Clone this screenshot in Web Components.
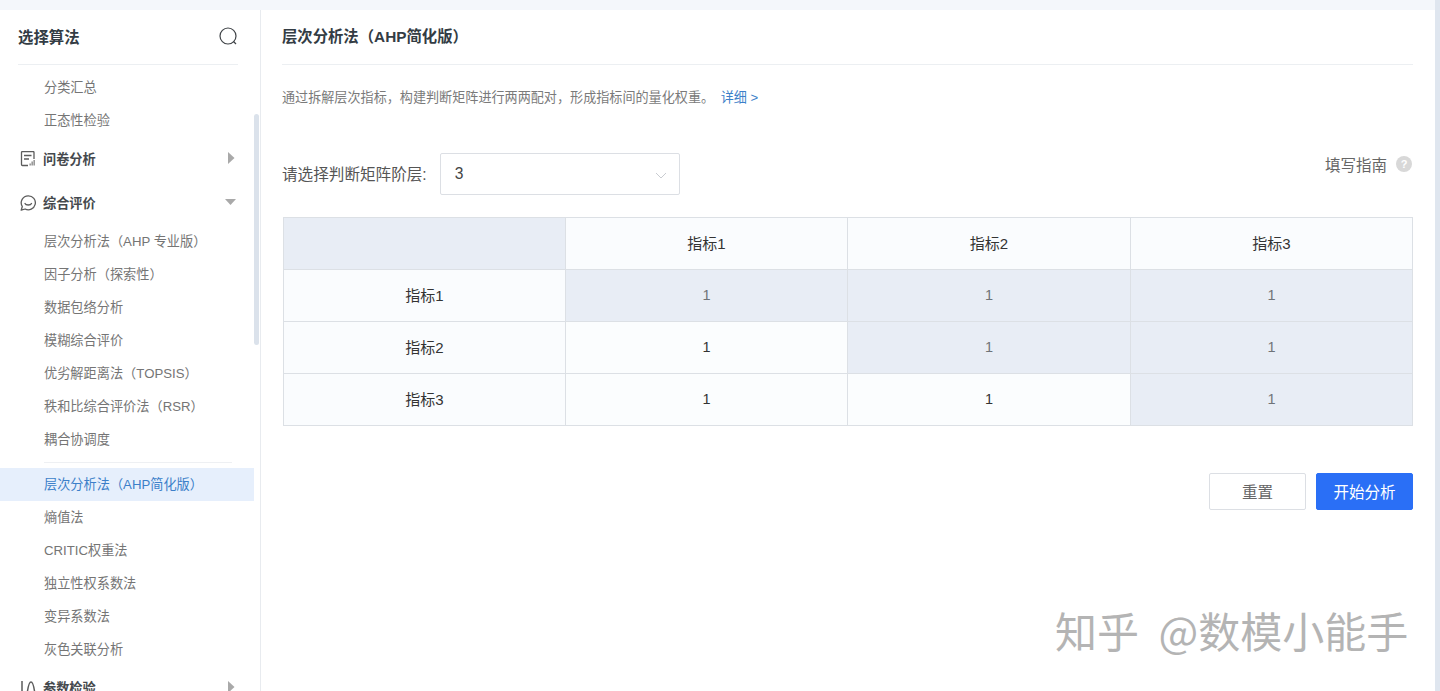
<!DOCTYPE html>
<html lang="zh">
<head>
<meta charset="utf-8">
<title>层次分析法</title>
<style>
    html, body {
        margin: 0;
        height: 691px;
        overflow: hidden;
        background: #f4f7fb;
        font-family: "Liberation Sans", "Noto Sans CJK SC", sans-serif;
    }
</style>
</head>
<body>
<app-shell>
    <algo-sidebar slot="side"></algo-sidebar>
    <ahp-panel slot="main"></ahp-panel>
</app-shell>
<water-mark>知乎 @数模小能手</water-mark>

<script>
class AppShell extends HTMLElement {
    constructor() {
        super();
        this.attachShadow({ mode: "open" });
        this.shadowRoot.innerHTML = `<style>
            :host {
                display: flex;
                height: 691px;
                box-sizing: border-box;
                padding: 10px 5px 0 0;
                position: relative;
            }
            .bar {
                position: absolute;
                right: 0;
                top: 0;
                bottom: 0;
                width: 5px;
                background: #dfe6ef;
            }
            .side { flex: 0 0 261px; display: flex; min-height: 0; }
            .main { flex: 1; display: flex; min-width: 0; background: #fff; }
        </style>
        <div class="side"><slot name="side"></slot></div>
        <div class="main"><slot name="main"></slot></div>
        <div class="bar"></div>`;
    }
}

class NavItem extends HTMLElement {
    constructor() {
        super();
        this.attachShadow({ mode: "open" });
        this.shadowRoot.innerHTML = `<style>
            :host {
                display: block;
                height: 33px;
                line-height: 33px;
                padding-left: 44px;
                font-size: 13.2px;
                color: #757575;
                white-space: nowrap;
            }
            :host([active]) {
                background: #e6effc;
                color: #3c7fc9;
            }
        </style><slot></slot>`;
    }
}

const NAV_ICONS = {
    form: `<path d="M8 14.500H2.500a1 1 0 0 1-1-1V1.500a1 1 0 0 1 1-1h10.500a1 1 0 0 1 1 1V8" fill="none" stroke="#5c5c5c" stroke-width="1.300"/>
           <path d="M4 4.500h7.500M4 8h5" stroke="#5c5c5c" stroke-width="1.300"/>
           <path d="M9.500 12.500h1.300v2H9.500zM11.500 10.500h1.300v4h-1.300zM13.500 9h1.300v5.500h-1.300z" fill="#808080"/>`,
    chat: `<path d="M8.300.8a7 7 0 1 1-3.200 13.200L1.200 15.200l1.100-3.700A7 7 0 0 1 8.300.8z" fill="none" stroke="#5c5c5c" stroke-width="1.300" stroke-linejoin="round"/>
           <path d="M5 8.500c.8 2 5.700 2 6.500 0" fill="none" stroke="#5c5c5c" stroke-width="1.300" stroke-linecap="round"/>`,
    wave: `<path d="M2 1v14M7 15c1-9 2.500-13 4-13s3 4 4 13" fill="none" stroke="#5c5c5c" stroke-width="1.500"/>`
};

class NavGroup extends HTMLElement {
    constructor() {
        super();
        this.attachShadow({ mode: "open" });
    }
    connectedCallback() {
        const open = this.hasAttribute("open");
        const arrow = open
            ? `<path d="M0 3h11L5.500 9z" fill="#a9a9a9"/>`
            : `<path d="M3 0l6.500 6L3 12z" fill="#a9a9a9"/>`;
        this.shadowRoot.innerHTML = `<style>
            :host {
                display: flex;
                align-items: center;
                height: 44px;
                padding: 0 17px 0 20px;
                font-size: 13.2px;
                font-weight: bold;
                color: #45494d;
            }
            svg.icon { width: 16px; height: 16px; flex: none; margin-right: 7px; }
            span { flex: 1; margin-bottom: 2px; }
            svg.arrow { width: 12px; height: 12px; flex: none; margin-bottom: 2px; }
        </style>
        <svg class="icon" viewBox="0 0 16 16">${NAV_ICONS[this.getAttribute("icon")]}</svg>
        <span>${this.getAttribute("label")}</span>
        <svg class="arrow" viewBox="0 0 12 12">${arrow}</svg>`;
    }
}

class AlgoSidebar extends HTMLElement {
    constructor() {
        super();
        this.attachShadow({ mode: "open" });
        this.shadowRoot.innerHTML = `<style>
            :host {
                display: block;
                width: 261px;
                box-sizing: border-box;
                background: #fff;
                border-right: 1px solid #e8ebef;
                position: relative;
                overflow: hidden;
            }
            header {
                display: flex;
                align-items: center;
                justify-content: space-between;
                height: 55px;
                margin: 0 22px 0 18px;
                padding-bottom: 3px;
                box-sizing: border-box;
                border-bottom: 1px solid #eceff2;
                font-size: 15.400px;
                font-weight: bold;
                color: #333c44;
            }
            header svg { width: 20px; height: 20px; margin-right: 0; }
            .list { width: 254px; padding-top: 6px; }
            .sep { height: 1px; margin: 6px 22px 5px 44px; background: #eef0f3; }
            .thumb {
                position: absolute;
                left: 254px;
                top: 104px;
                width: 5px;
                height: 231px;
                border-radius: 3px;
                background: #dbe2eb;
            }
        </style>
        <header>
            <span>选择算法</span>
            <svg viewBox="0 0 20 20"><circle cx="10" cy="10" r="8" fill="none" stroke="#3f4347" stroke-width="1.200"/><path d="M15.500 15.500l2.500 2.500" stroke="#3f4347" stroke-width="1.200"/></svg>
        </header>
        <div class="list">
            <nav-item>分类汇总</nav-item>
            <nav-item>正态性检验</nav-item>
            <nav-group icon="form" label="问卷分析"></nav-group>
            <nav-group icon="chat" label="综合评价" open></nav-group>
            <nav-item>层次分析法（AHP 专业版）</nav-item>
            <nav-item>因子分析（探索性）</nav-item>
            <nav-item>数据包络分析</nav-item>
            <nav-item>模糊综合评价</nav-item>
            <nav-item>优劣解距离法（TOPSIS）</nav-item>
            <nav-item>秩和比综合评价法（RSR）</nav-item>
            <nav-item>耦合协调度</nav-item>
            <div class="sep"></div>
            <nav-item active>层次分析法（AHP简化版）</nav-item>
            <nav-item>熵值法</nav-item>
            <nav-item>CRITIC权重法</nav-item>
            <nav-item>独立性权系数法</nav-item>
            <nav-item>变异系数法</nav-item>
            <nav-item>灰色关联分析</nav-item>
            <nav-group icon="wave" label="参数检验"></nav-group>
        </div>
        <div class="thumb"></div>`;
    }
}

class MatrixTable extends HTMLElement {
    constructor() {
        super();
        this.attachShadow({ mode: "open" });
    }
    connectedCallback() {
        const size = Number(this.getAttribute("size"));
        let cells = `<div class="c shade"></div>`;
        for (let i = 1; i <= size; i++) {
            cells += `<div class="c head">指标${i}</div>`;
        }
        for (let r = 1; r <= size; r++) {
            cells += `<div class="c head">指标${r}</div>`;
            for (let c = 1; c <= size; c++) {
                cells += c >= r
                    ? `<div class="c shade val">1</div>`
                    : `<div class="c plain val">1</div>`;
            }
        }
        this.shadowRoot.innerHTML = `<style>
            :host {
                display: grid;
                grid-template-columns: 282px 282px 283px 1fr;
                grid-auto-rows: 52px;
                margin: 0 0 0 1px;
                border-top: 1px solid #dce0e5;
                border-left: 1px solid #dce0e5;
                font-size: 15px;
            }
            .c {
                display: flex;
                align-items: center;
                justify-content: center;
                box-sizing: border-box;
                padding-bottom: 2px;
                border-right: 1px solid #dce0e5;
                border-bottom: 1px solid #dce0e5;
            }
            .head { background: #fafcfe; color: #333; }
            .shade { background: #e8edf5; }
            .plain { background: #fbfdfe; }
            .val { font-size: 14.500px; color: #333; }
            .shade.val { color: #6f7378; }
        </style>${cells}`;
    }
}

class AhpPanel extends HTMLElement {
    constructor() {
        super();
        this.attachShadow({ mode: "open" });
        this.shadowRoot.innerHTML = `<style>
            :host {
                display: block;
                flex: 1;
                box-sizing: border-box;
                padding: 0 22px 0 21px;
                color: #555;
                min-width: 0;
            }
            h1 {
                margin: 0;
                height: 55px;
                line-height: 53px;
                box-sizing: border-box;
                border-bottom: 1px solid #eceff2;
                font-size: 15.350px;
                font-weight: bold;
                color: #333c44;
            }
            .desc {
                margin: 0;
                padding-top: 24px;
                height: 64px;
                box-sizing: border-box;
                line-height: 18px;
                font-size: 13.100px;
                color: #7a7a7a;
            }
            .desc a { margin-left: 3px; color: #3c7fc9; text-decoration: none; }
            .pick {
                display: flex;
                align-items: center;
                height: 42px;
                margin-top: 24px;
                font-size: 15.600px;
            }
            .pick > span { margin-bottom: 3px; }
            .select {
                display: flex;
                align-items: center;
                justify-content: space-between;
                box-sizing: border-box;
                width: 240px;
                height: 42px;
                margin-left: 13px;
                padding: 0 12px 0 14px;
                border: 1px solid #dcdfe4;
                border-radius: 2px;
                color: #444;
            }
            .select svg { width: 12px; height: 8px; margin-top: 4px; }
            .guide {
                display: flex;
                align-items: center;
                gap: 9px;
                margin-left: auto;
                margin-top: -17px;
                padding-right: 1px;
                font-size: 15.500px;
                color: #666;
            }
            .guide span { margin-bottom: 3px; }
            .guide i {
                width: 16px;
                height: 16px;
                margin-bottom: 3px;
                border-radius: 50%;
                background: #d8d8d8;
                color: #fff;
                font: bold 11px/16px "Liberation Sans", sans-serif;
                text-align: center;
            }
            matrix-table { margin-top: 22px; }
            .actions {
                display: flex;
                justify-content: flex-end;
                gap: 10px;
                margin-top: 47px;
            }
            button {
                width: 97px;
                height: 37px;
                padding: 0 0 2px;
                border: 1px solid #dcdfe4;
                border-radius: 2px;
                background: #fff;
                color: #666;
                font: 15.500px "Liberation Sans", "Noto Sans CJK SC", sans-serif;
            }
            button.go {
                border-color: #2a6ff6;
                background: #2a6ff6;
                color: #fff;
            }
        </style>
        <h1>层次分析法（AHP简化版）</h1>
        <p class="desc">通过拆解层次指标，构建判断矩阵进行两两配对，形成指标间的量化权重。 <a>详细 &gt;</a></p>
        <div class="pick">
            <span>请选择判断矩阵阶层:</span>
            <div class="select">
                <span>3</span>
                <svg viewBox="0 0 12 8"><path d="M1 1l5 5 5-5" fill="none" stroke="#c9ccd1" stroke-width="1"/></svg>
            </div>
            <div class="guide"><span>填写指南</span><i>?</i></div>
        </div>
        <matrix-table size="3"></matrix-table>
        <div class="actions">
            <button>重置</button>
            <button class="go">开始分析</button>
        </div>`;
    }
}

class WaterMark extends HTMLElement {
    constructor() {
        super();
        this.attachShadow({ mode: "open" });
        this.shadowRoot.innerHTML = `<style>
            :host {
                position: absolute;
                left: 1055px;
                top: 601px;
                font-size: 42px;
                line-height: 58px;
                word-spacing: 10px;
                white-space: nowrap;
                color: #b4b4b4;
                text-shadow: 1px -1px 0 #fff;
                font-family: "Noto Sans CJK SC", sans-serif;
            }
        </style><slot></slot>`;
    }
}

customElements.define("app-shell", AppShell);
customElements.define("nav-item", NavItem);
customElements.define("nav-group", NavGroup);
customElements.define("algo-sidebar", AlgoSidebar);
customElements.define("matrix-table", MatrixTable);
customElements.define("ahp-panel", AhpPanel);
customElements.define("water-mark", WaterMark);
</script>
</body>
</html>
